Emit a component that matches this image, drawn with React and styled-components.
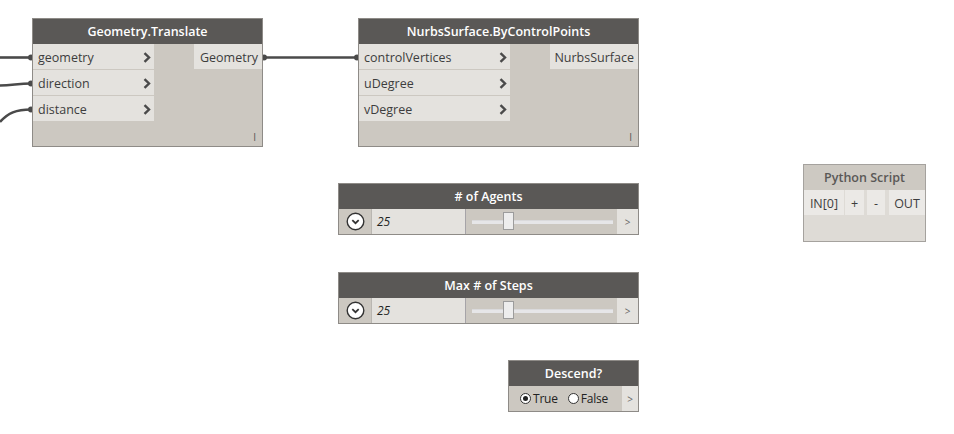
import React from "react";
import styled, { createGlobalStyle } from "styled-components";

const GlobalStyle = createGlobalStyle`
  html, body { margin: 0; padding: 0; background: #ffffff; }
  body { font-family: "Open Sans", "Noto Sans", sans-serif; }
`;

const Canvas = styled.div`
  position: relative;
  width: 954px;
  height: 434px;
  overflow: hidden;
  background: #ffffff;
`;

const Wires = styled.svg`
  position: absolute;
  left: 0;
  top: 0;
  width: 954px;
  height: 434px;
  pointer-events: none;
`;

const Node = styled.div`
  position: absolute;
  left: ${(p) => p.$x}px;
  top: ${(p) => p.$y}px;
  width: ${(p) => p.$w}px;
  box-sizing: border-box;
  border: 1px solid ${(p) => (p.$light ? "#a5a29e" : "#8e8b87")};
  background: ${(p) => (p.$light ? "#dedbd6" : "#ccc8c1")};
  display: flex;
  flex-direction: column;
`;

const Header = styled.div`
  height: ${(p) => p.$h || 25}px;
  background: ${(p) => (p.$light ? "#cdc9c2" : "#5a5856")};
  color: ${(p) => (p.$light ? "#5a5856" : "#ffffff")};
  font-size: 12.5px;
  font-weight: 600;
  display: flex;
  align-items: center;
  justify-content: center;
  padding-bottom: 1px;
  box-sizing: border-box;
`;

const Body = styled.div`
  display: flex;
  justify-content: space-between;
  align-items: flex-start;
  min-height: ${(p) => p.$h}px;
  position: relative;
`;

const Inputs = styled.div`
  width: ${(p) => p.$w}px;
  display: flex;
  flex-direction: column;
  gap: 1px;
`;

const PortRow = styled.div`
  height: 25px;
  box-sizing: border-box;
  background: #e4e2de;
  display: flex;
  align-items: center;
  justify-content: space-between;
  padding: 1px 3px 0 5px;
  font-size: 12.5px;
  color: #3d3d3d;
`;

const Output = styled.div`
  width: ${(p) => p.$w}px;
  height: 25px;
  background: #e4e2de;
  display: flex;
  align-items: center;
  justify-content: flex-end;
  padding: 1px 4px 0 0;
  box-sizing: border-box;
  font-size: 12.5px;
  color: #3d3d3d;
`;

const Lacing = styled.span`
  position: absolute;
  right: 6px;
  bottom: 4px;
  font-size: 10px;
  color: #555;
  line-height: 1;
`;

const Chevron = () => (
  <svg width="8" height="11" viewBox="0 0 8 11">
    <path d="M1.5 1.2 L6 5.5 L1.5 9.8" fill="none" stroke="#4a4a4a" strokeWidth="2.4" />
  </svg>
);

const ControlRow = styled.div`
  height: 25px;
  display: flex;
  align-items: stretch;
`;

const DropCell = styled.div`
  width: 32px;
  display: flex;
  align-items: center;
  justify-content: center;
  border-right: 1px solid #b9b6b1;
`;

const ValueField = styled.div`
  width: 94px;
  background: #e4e2de;
  border-right: 1px solid #a6a4a8;
  display: flex;
  align-items: center;
  padding-left: 5px;
  box-sizing: border-box;
  font-size: 12px;
  font-style: italic;
  color: #222;
`;

const SliderArea = styled.div`
  flex: 1;
  position: relative;
  display: flex;
  align-items: center;
  padding: 0 4px 0 6px;
`;

const Track = styled.div`
  flex: 1;
  height: 3px;
  background: #e6e6e8;
  border-top: 1px solid #dadadc;
`;

const Thumb = styled.div`
  position: absolute;
  top: 3px;
  left: ${(p) => p.$pos}px;
  width: 11px;
  height: 18px;
  box-sizing: border-box;
  background: #ededed;
  border: 1px solid #9c9c9c;
`;

const MoreCell = styled.div`
  width: ${(p) => p.$w}px;
  background: #e4e2de;
  display: flex;
  align-items: center;
  justify-content: center;
  font-size: 10px;
  color: #666;
`;

const RadioGroup = styled.div`
  flex: 1;
  display: flex;
  align-items: center;
  padding-left: 11px;
  gap: 10px;
`;

const RadioLabel = styled.label`
  display: flex;
  align-items: center;
  gap: 2px;
  font-size: 12px;
  color: #222;
  letter-spacing: -0.2px;
`;

const RadioDot = styled.span`
  width: 11px;
  height: 11px;
  box-sizing: border-box;
  border-radius: 50%;
  border: 1px solid #333;
  background: #fff;
  display: inline-flex;
  align-items: center;
  justify-content: center;
  &::after {
    content: "";
    width: 5px;
    height: 5px;
    border-radius: 50%;
    background: ${(p) => (p.$on ? "#222" : "transparent")};
  }
`;

const PyRow = styled.div`
  display: flex;
  height: 25px;
`;

const PyCell = styled.div`
  width: ${(p) => p.$w}px;
  margin-left: ${(p) => p.$ml || 0}px;
  background: #ebe9e6;
  display: flex;
  align-items: center;
  justify-content: center;
  padding-top: 1px;
  box-sizing: border-box;
  font-size: 12.5px;
  color: #3d3d3d;
`;

const DropIcon = () => (
  <svg width="19" height="19" viewBox="0 0 19 19">
    <circle cx="9.5" cy="9.5" r="8.3" fill="#ffffff" stroke="#333" strokeWidth="1.4" />
    <path d="M6.3 8.2 L9.5 11.2 L12.7 8.2" fill="none" stroke="#333" strokeWidth="1.8" />
  </svg>
);

const FunctionNode = ({ x, y, w, title, inputs, inW, output, outW }) => (
  <Node $x={x} $y={y} $w={w}>
    <Header>{title}</Header>
    <Body $h={102}>
      <Inputs $w={inW}>
        {inputs.map((n) => (
          <PortRow key={n}>
            <span>{n}</span>
            <Chevron />
          </PortRow>
        ))}
      </Inputs>
      <Output $w={outW}>{output}</Output>
      <Lacing>I</Lacing>
    </Body>
  </Node>
);

const SliderNode = ({ x, y, title, value, thumb }) => (
  <Node $x={x} $y={y} $w={301}>
    <Header>{title}</Header>
    <ControlRow>
      <DropCell>
        <DropIcon />
      </DropCell>
      <ValueField>{value}</ValueField>
      <SliderArea>
        <Track />
        <Thumb $pos={thumb} />
      </SliderArea>
      <MoreCell $w={21}>&gt;</MoreCell>
    </ControlRow>
  </Node>
);

export default function App() {
  return (
    <Canvas>
      <GlobalStyle />
      <Wires viewBox="0 0 954 434">
        <g fill="none" stroke="#4a4a4a" strokeWidth="2.6">
          <path d="M0 57.5 L31 57.5" />
          <path d="M0 85.5 C12 85.5 18 83.5 31 83.5" />
          <path d="M0 122 C8 113 16 109.5 31 109.5" />
          <path d="M263 57.5 L357 57.5" />
        </g>
        <g fill="#4a4a4a">
          <circle cx="31" cy="57.5" r="3" />
          <circle cx="31" cy="83.5" r="3" />
          <circle cx="31" cy="109.5" r="3" />
          <circle cx="264" cy="57.5" r="3" />
          <circle cx="357" cy="57.5" r="3" />
        </g>
      </Wires>

      <FunctionNode
        x={32}
        y={18}
        w={231}
        title="Geometry.Translate"
        inputs={["geometry", "direction", "distance"]}
        inW={121}
        output="Geometry"
        outW={68}
      />
      <FunctionNode
        x={358}
        y={18}
        w={281}
        title="NurbsSurface.ByControlPoints"
        inputs={["controlVertices", "uDegree", "vDegree"]}
        inW={151}
        output="NurbsSurface"
        outW={88}
      />

      <SliderNode x={338} y={183} title="# of Agents" value="25" thumb={37} />
      <SliderNode x={338} y={272} title="Max # of Steps" value="25" thumb={37} />

      <Node $x={508} $y={360} $w={131}>
        <Header>Descend?</Header>
        <ControlRow>
          <RadioGroup>
            <RadioLabel>
              <RadioDot $on />
              True
            </RadioLabel>
            <RadioLabel>
              <RadioDot />
              False
            </RadioLabel>
          </RadioGroup>
          <MoreCell $w={16}>&gt;</MoreCell>
        </ControlRow>
      </Node>

      <Node $x={803} $y={164} $w={123} $light>
        <Header $light>Python Script</Header>
        <Body $h={51}>
          <PyRow>
            <PyCell $w={40}>IN[0]</PyCell>
            <PyCell $w={19} $ml={1}>+</PyCell>
            <PyCell $w={18} $ml={3}>-</PyCell>
            <PyCell $w={36} $ml={4}>OUT</PyCell>
          </PyRow>
        </Body>
      </Node>
    </Canvas>
  );
}
